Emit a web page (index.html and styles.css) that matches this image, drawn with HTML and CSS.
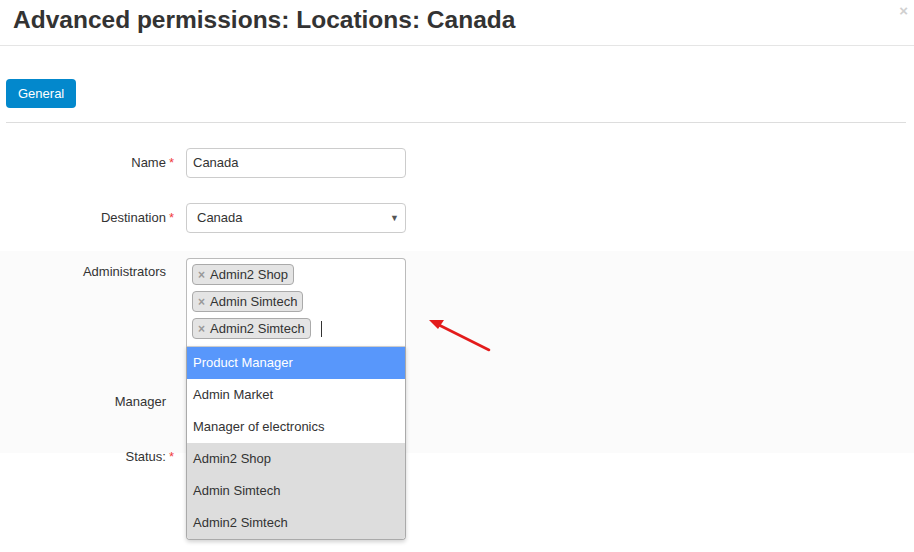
FILE: index.html
```html
<!DOCTYPE html>
<html>
<head>
<meta charset="utf-8">
<link rel="stylesheet" href="styles.css">
</head>
<body>
<div class="page">
  <header class="header">
    <h1 class="title">Advanced permissions: Locations: Canada</h1>
    <span class="close">×</span>
  </header>

  <div class="tabs">
    <button class="btn-tab">General</button>
  </div>
  <div class="divider"></div>

  <div class="row row-first">
    <label class="label">Name<span class="req">*</span></label>
    <div class="input">Canada</div>
  </div>

  <div class="row row-next">
    <label class="label">Destination<span class="req">*</span></label>
    <div class="select"><span>Canada</span><span class="caret">▼</span></div>
  </div>

  <div class="band">
    <div class="row">
      <label class="label label-top">Administrators</label>
      <div class="multi-wrap">
        <div class="multi">
          <span class="tag"><span class="tag-x">×</span>Admin2 Shop</span>
          <span class="tag"><span class="tag-x">×</span>Admin Simtech</span>
          <span class="tag"><span class="tag-x">×</span>Admin2 Simtech</span>
          <span class="cursor"></span>
        </div>
        <ul class="dropdown">
          <li class="opt opt-hl">Product Manager</li>
          <li class="opt">Admin Market</li>
          <li class="opt">Manager of electronics</li>
          <li class="opt opt-sel">Admin2 Shop</li>
          <li class="opt opt-sel">Admin Simtech</li>
          <li class="opt opt-sel">Admin2 Simtech</li>
        </ul>
      </div>
    </div>
    <div class="row row-manager">
      <label class="label">Manager</label>
      <div class="select"><span></span></div>
    </div>
  </div>

  <div class="row row-status">
    <label class="label">Status:<span class="req">*</span></label>
    <div class="status-ctl"></div>
  </div>

  <svg class="arrow" width="80" height="50" viewBox="0 0 80 50">
    <line x1="68" y1="39" x2="18" y2="14" stroke="#e31b1b" stroke-width="2.6" stroke-linecap="round"/>
    <polygon points="8,9 23,9 17,18" fill="#e31b1b"/>
  </svg>
</div>
</body>
</html>
```

FILE: styles.css
```css
* { box-sizing: border-box; }

html, body {
  margin: 0;
  padding: 0;
  background: #ffffff;
}

body {
  font-family: "Liberation Sans", Arial, sans-serif;
  font-size: 13px;
  color: #333333;
  width: 914px;
  height: 552px;
  overflow: hidden;
}

.page {
  position: relative;
  height: 552px;
}

.header {
  display: flex;
  justify-content: space-between;
  align-items: flex-start;
  height: 46px;
  padding: 5px 0 0 13px;
  border-bottom: 1px solid #e5e5e5;
}

.title {
  margin: 0;
  font-size: 24.5px;
  line-height: 30px;
  font-weight: bold;
  color: #333333;
}

.close {
  font-size: 15px;
  font-weight: bold;
  line-height: 15px;
  color: #d0d0d0;
  margin: -2px 6px 0 0;
}

.tabs {
  padding: 33px 0 0 6px;
  height: 76px;
}

.btn-tab {
  height: 29px;
  padding: 0 12px;
  border: 0;
  border-radius: 4px;
  background: #0388cc;
  color: #ffffff;
  font-family: "Liberation Sans", Arial, sans-serif;
  font-size: 13px;
  line-height: 29px;
}

.divider {
  margin: 0 8px 0 6px;
  border-top: 1px solid #dddddd;
}

.row {
  display: grid;
  grid-template-columns: 168px 220px;
  column-gap: 12px;
  padding-left: 6px;
  align-items: start;
}

.row-first { margin-top: 25px; }
.row-next { margin-top: 25px; }

.label {
  text-align: right;
  padding-top: 7px;
  padding-right: 8px;
  line-height: 16px;
  color: #333333;
  white-space: nowrap;
}

.label-top { padding-top: 6px; }

.req {
  color: #f03c3c;
  margin-left: 3px;
  margin-right: -8px;
}

.input, .select {
  height: 30px;
  border: 1px solid #cccccc;
  border-radius: 4px;
  background: #ffffff;
  line-height: 28px;
  color: #333333;
}

.input { padding-left: 6px; }

.select {
  display: flex;
  justify-content: space-between;
  padding: 0 6px 0 10px;
}

.caret {
  font-size: 9px;
  color: #555555;
}

.band {
  margin-top: 18px;
  padding: 7px 0 36px;
  background: #fbfbfb;
}

.multi-wrap {
  position: relative;
}

.multi {
  display: flex;
  flex-wrap: wrap;
  align-items: center;
  gap: 6px 5px;
  height: 89px;
  padding: 5px 5px 0;
  border: 1px solid #bbbbbb;
  border-bottom: 0;
  border-radius: 4px 4px 0 0;
  background: #ffffff;
  align-content: flex-start;
}

.tag {
  height: 21px;
  padding: 0 5px 0 5px;
  border: 1px solid #aaaaaa;
  border-radius: 4px;
  background: #e4e4e4;
  line-height: 19px;
  color: #333333;
  white-space: nowrap;
}

.tag-x {
  color: #999999;
  font-weight: bold;
  font-size: 12px;
  margin-right: 5px;
}

.cursor {
  width: 1px;
  height: 16px;
  margin-left: 5px;
  background: #333333;
}

.dropdown {
  position: absolute;
  left: 0;
  top: 88px;
  width: 220px;
  margin: 0;
  padding: 0;
  list-style: none;
  border: 1px solid #aaaaaa;
  border-top: 1px solid #cccccc;
  border-radius: 0 0 4px 4px;
  background: #ffffff;
  box-shadow: 0 2px 4px rgba(0, 0, 0, 0.18);
  overflow: hidden;
  z-index: 5;
}

.opt {
  height: 32px;
  padding: 0 6px;
  line-height: 32px;
  color: #333333;
  white-space: nowrap;
}

.opt-hl {
  background: #5897fb;
  color: #ffffff;
}

.opt-sel {
  background: #dddddd;
}

.row-manager { margin-top: 40px; }

.row-status { margin-top: -11px; }

.status-ctl { height: 30px; }

.arrow {
  position: absolute;
  left: 421px;
  top: 311px;
}
```
